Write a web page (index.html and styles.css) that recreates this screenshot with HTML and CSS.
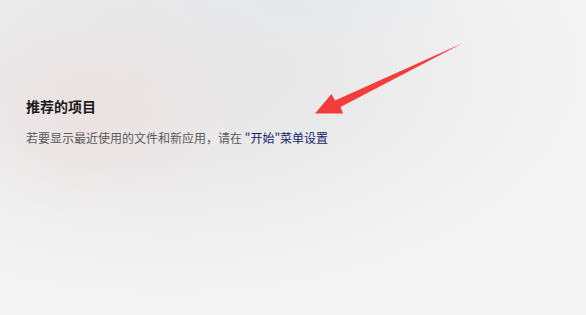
FILE: index.html
```html
<!DOCTYPE html>
<html lang="zh-CN">
<head>
<meta charset="utf-8">
<link rel="stylesheet" href="styles.css">
</head>
<body>
<div class="page">
  <section class="recommended">
    <h2 class="title">推荐的项目</h2>
    <p class="desc">若要显示最近使用的文件和新应用，请在 <a class="link" href="#">"开始"菜单设置</a></p>
  </section>
  <svg class="arrow" width="586" height="315" viewBox="0 0 586 315" aria-hidden="true">
    <polygon points="315,113.5 331.5,94 335,100.5 463,43 340.5,107 343,113.5" fill="#f33c3c"/>
  </svg>
</div>
</body>
</html>
```
FILE: styles.css
```css
html, body {
  margin: 0;
  padding: 0;
}
body {
  width: 586px;
  height: 315px;
  overflow: hidden;
  font-family: "Noto Sans CJK SC", "Noto Sans", sans-serif;
}
.page {
  position: relative;
  width: 586px;
  height: 315px;
  background:
    radial-gradient(ellipse 140px 100px at 90px 115px, rgba(238, 224, 224, 0.75), rgba(238, 224, 224, 0) 100%),
    radial-gradient(ellipse 160px 50px at 310px 0px, rgba(228, 232, 238, 0.8), rgba(228, 232, 238, 0) 100%),
    radial-gradient(ellipse 420px 230px at 170px 70px, #e8e7e8 0%, #eae9ea 40%, #f0f0f0 75%, rgba(244, 244, 244, 0) 100%),
    #f4f4f4;
}
.recommended {
  padding: 96px 0 0 26px;
}
.title {
  margin: 0;
  font-size: 14px;
  line-height: 20px;
  font-weight: 700;
  color: #1b1b1b;
}
.desc {
  margin: 13px 0 0;
  font-size: 12px;
  line-height: 17px;
  color: #5a5a5a;
}
.link {
  color: #13236a;
  text-decoration: none;
}
.arrow {
  position: absolute;
  left: 0;
  top: 0;
}
```
